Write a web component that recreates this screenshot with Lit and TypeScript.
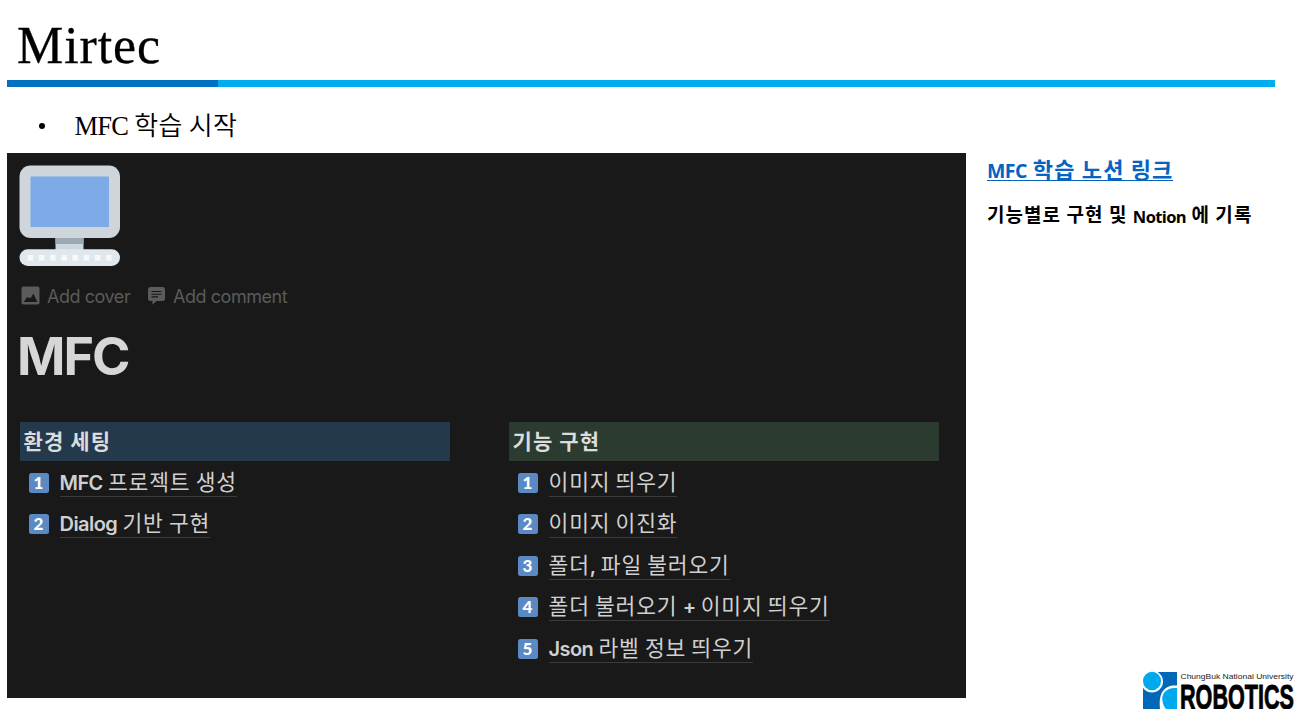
import { LitElement, html, css, svg } from "lit";
import { customElement, property } from "lit/decorators.js";

type Run = { t: string; k: "en" | "ko" };
type Item = { n: number; runs: Run[] };

const setup: Item[] = [
  { n: 1, runs: [{ t: "MFC", k: "en" }, { t: " 프로젝트 생성", k: "ko" }] },
  { n: 2, runs: [{ t: "Dialog", k: "en" }, { t: " 기반 구현", k: "ko" }] },
];
const features: Item[] = [
  { n: 1, runs: [{ t: "이미지 띄우기", k: "ko" }] },
  { n: 2, runs: [{ t: "이미지 이진화", k: "ko" }] },
  { n: 3, runs: [{ t: "폴더", k: "ko" }, { t: ",", k: "en" }, { t: " 파일 불러오기", k: "ko" }] },
  { n: 4, runs: [{ t: "폴더 불러오기 ", k: "ko" }, { t: "+", k: "en" }, { t: " 이미지 띄우기", k: "ko" }] },
  { n: 5, runs: [{ t: "Json", k: "en" }, { t: " 라벨 정보 띄우기", k: "ko" }] },
];

@customElement("page-list")
export class PageList extends LitElement {
  @property() heading = "";
  @property() tone = "blue";
  @property({ attribute: false }) items: Item[] = [];

  static styles = css`
    :host { display: block; width: 430px; }
    .head {
      height: 39px; padding-left: 3.5px; box-sizing: border-box; letter-spacing: 1.1px;
      font: 700 21px/37px "Noto Sans CJK KR", sans-serif; color: #dcdcdc;
    }
    .blue { background: #25394d; }
    .green { background: #2c3b30; }
    .rows { padding: 1px 0 0 8.5px; }
    .row { display: flex; align-items: center; height: 41.5px; gap: 11px; }
    .key {
      width: 20px; height: 20px; border-radius: 2.5px; background: #5b89c3; color: #fff;
      font: 900 17px/20px Lato, sans-serif; text-align: center; flex: none;
    }
    .link {
      height: 27px; box-sizing: border-box; border-bottom: 1px solid #3b3b3b;
      white-space: pre; color: #d0d0d0; margin-top: 1px; display: flex;
    }
    .ko { font: 400 21.5px/22px "Noto Sans CJK KR", sans-serif; letter-spacing: 0.85px; word-spacing: -0.5px; }
    .en { font: 600 20px/26px Inter, sans-serif; letter-spacing: -0.55px; }
  `;

  render() {
    return html`
      <div class="head ${this.tone}">${this.heading}</div>
      <div class="rows">
        ${this.items.map((i) => html`<div class="row">
          <span class="key">${i.n}</span>
          <span class="link">${i.runs.map((r) => html`<span class=${r.k}>${r.t}</span>`)}</span>
        </div>`)}
      </div>`;
  }
}

@customElement("app-root")
export class AppRoot extends LitElement {
  static styles = css`
    :host {
      display: flex; flex-direction: column; position: relative; width: 1294px; height: 709px;
      overflow: hidden; background: #fff; color: #000; box-sizing: border-box; padding-left: 7px;
    }
    .title {
      height: 80px; padding: 16px 0 0 10px; box-sizing: border-box;
      font: 400 52px/60px "Liberation Serif", serif; letter-spacing: 0.9px; -webkit-text-stroke: 0.3px #000;
    }
    .bar { width: 1268px; height: 7px; background: #00adef; flex: none; }
    .bar-lead { width: 211px; height: 7px; background: #0070c0; }
    .bullet { display: flex; height: 66px; padding: 19px 0 0 31px; box-sizing: border-box; white-space: pre; }
    .dot { width: 6px; height: 6px; border-radius: 50%; background: #000; margin: 17px 29.5px 0 1px; }
    .b-en { font: 400 26.5px/40px "Liberation Serif", serif; letter-spacing: -0.8px; }
    .b-ko { font: 350 26px/36px "Noto Sans CJK KR", sans-serif; letter-spacing: 0.3px; }
    .main { display: flex; gap: 21px; }
    .panel {
      width: 959px; height: 545px; background: #191919; box-sizing: border-box; padding: 12px 0 0 12px;
      display: flex; flex-direction: column; flex: none;
    }
    .computer { display: block; width: 102px; height: 102px; }
    .actions {
      display: flex; align-items: center; height: 24px; margin-top: 18px; padding-left: 2px;
      font: 400 18px/24px Inter, sans-serif; color: #5b5b5b; white-space: nowrap; letter-spacing: -0.45px;
    }
    .actions svg { width: 19px; height: 19px; flex: none; margin-top: -3px; }
    .cover { margin-left: 7px; width: 100px; }
    .comment { margin-left: 7px; }
    .name { margin-top: 16px; height: 64px; font: 700 52px/64px Inter, sans-serif; color: #d6d6d6; letter-spacing: -2px; margin-left: -2px; }
    .cols { display: flex; gap: 59px; margin: 33px 0 0 1px; }
    .aside { display: flex; flex-direction: column; white-space: pre; }
    .link { display: flex; align-self: flex-start; height: 28px; box-sizing: border-box; border-bottom: 1.5px solid #0563c1; color: #0563c1; }
    .l-en { font: 700 19.5px/36px "Open Sans", sans-serif; letter-spacing: -0.6px; }
    .l-ko { font: 700 22px/30px "Noto Sans CJK KR", sans-serif; letter-spacing: 1.15px; margin-right: -0.5px; }
    .note { display: flex; margin-top: 19px; height: 30px; }
    .n-en { font: 700 16.5px/33px "Open Sans", sans-serif; letter-spacing: -0.6px; }
    .n-ko { font: 700 19px/28px "Noto Sans CJK KR", sans-serif; letter-spacing: 1.05px; }
    .logo { position: absolute; right: 0; bottom: 0; width: 151px; height: 38px; display: block; }
  `;

  private computer() {
    return html`<svg class="computer" viewBox="0 0 102 102">
      <rect x="36.500" y="72" width="28" height="14" fill="#ccd6dd" />
      <rect x="36.500" y="72" width="28" height="7" fill="#9aaab4" />
      <rect x="0.500" y="0.500" width="100.500" height="72.500" rx="11" fill="#ced6dc" />
      <rect x="11.500" y="11.500" width="78.500" height="50.500" fill="#7dabe7" />
      <rect x="0.500" y="84.300" width="100.500" height="16.700" rx="8.300" fill="#e1e8ed" />
      ${[0, 1, 2, 3, 4, 5, 6, 7].map((i) => svg`<rect x=${8.7 + i * 11.2} y="90" width="5.600" height="5.600" fill="#f6f8fa" />`)}
    </svg>`;
  }

  render() {
    return html`
      <div class="title">Mirtec</div>
      <div class="bar"><div class="bar-lead"></div></div>
      <div class="bullet"><span class="dot"></span><span class="b-en">MFC</span><span class="b-ko"> 학습 시작</span></div>
      <div class="main">
        <section class="panel">
          ${this.computer()}
          <div class="actions">
            <svg viewBox="0 0 19 19"><rect x="0.500" y="0.500" width="18" height="18" rx="2" fill="#5b5b5b" /><path fill="#191919" d="M2.800 16l3.400-5 1.500 1.300 1.200-1 .8 1 2.600-4.800L16.400 16Z" /></svg>
            <span class="cover">Add cover</span>
            <svg viewBox="0 0 19 19"><path fill="#5b5b5b" d="M3.500 1h12a2.500 2.500 0 0 1 2.500 2.500v9a2.500 2.500 0 0 1-2.500 2.500H9.500l-4 3.800V15h-2A2.500 2.500 0 0 1 1 12.500v-9A2.500 2.500 0 0 1 3.500 1Z" /><path stroke="#191919" stroke-width="1.100" d="M4.500 5.500h10M4.500 8.200h10M4.500 10.900h6.500" /></svg>
            <span class="comment">Add comment</span>
          </div>
          <div class="name">MFC</div>
          <div class="cols">
            <page-list heading="환경 세팅" tone="blue" .items=${setup}></page-list>
            <page-list heading="기능 구현" tone="green" .items=${features}></page-list>
          </div>
        </section>
        <aside class="aside">
          <div class="link"><span class="l-en">MFC</span><span class="l-ko"> 학습 노션 링크</span></div>
          <div class="note"><span class="n-ko">기능별로 구현 및 </span><span class="n-en">Notion</span><span class="n-ko"> 에 기록</span></div>
        </aside>
      </div>
      <svg class="logo" viewBox="0 0 151 38">
        <path d="M12 1h22v37H0V12Z" fill="#0068b7" />
        <path d="M0 1h12v10H0Z" fill="#fff" />
        <circle cx="9" cy="10.500" r="11" fill="#fff" />
        <path d="M34 14.500C22 13.500 15 21 17 38h17Z" fill="#fff" />
        <ellipse cx="9" cy="10" rx="9" ry="9.300" fill="#00a9ee" />
        <path d="M34 17C24 16 18 22 19.500 30C20 33 21 36 23 38H34Z" fill="#00a9ee" />
        <text x="37.500" y="7.700" font-family="Liberation Sans" font-size="8" fill="#222" textLength="113" lengthAdjust="spacingAndGlyphs">ChungBuk National University</text>
        <text x="37" y="37.500" font-family="Liberation Sans" font-weight="700" font-size="35" textLength="114" lengthAdjust="spacingAndGlyphs" stroke="#000" stroke-width="0.900">ROBOTICS</text>
      </svg>`;
  }
}
